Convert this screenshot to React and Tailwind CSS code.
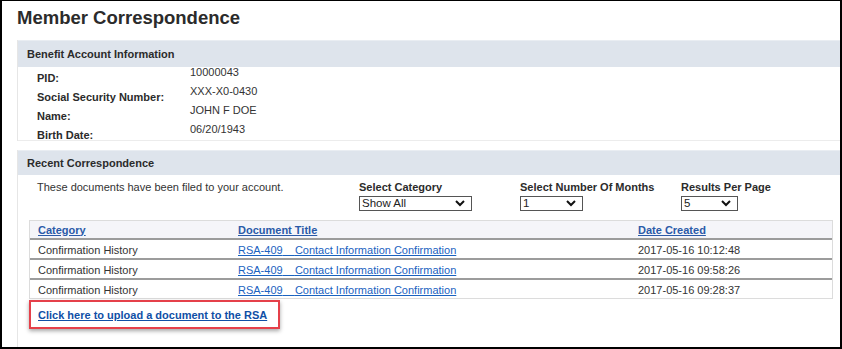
import React from "react";

const font = { fontFamily: '"Liberation Sans", Arial, sans-serif' };

function Chevron() {
  return (
    <svg width="10" height="7" viewBox="0 0 10 7" className="shrink-0">
      <path d="M1 1 L5 5 L9 1" fill="none" stroke="#111" strokeWidth="2" />
    </svg>
  );
}

function Select({ value, width }) {
  return (
    <div
      className={`mt-[2px] flex h-[15px] items-center justify-between border border-[#555] bg-white pl-[2px] pr-[6px] text-[11.5px] leading-[13px] text-[#222] ${width}`}
    >
      <span>{value}</span>
      <Chevron />
    </div>
  );
}

const rows = [
  "2017-05-16 10:12:48",
  "2017-05-16 09:58:26",
  "2017-05-16 09:28:37",
];

export default function App() {
  return (
    <div
      style={font}
      className="h-[349px] w-[842px] overflow-hidden border-t border-r-2 border-b-2 border-l-2 border-black bg-white text-[11px] text-[#333]"
    >
      <h1 className="ml-[15px] mt-[5px] whitespace-nowrap text-[18.5px] font-bold leading-[23px] text-[#2b2b2b]">
        Member Correspondence
      </h1>

      {/* Panel 1 */}
      <div className="ml-[15px] mt-[11px] border-l border-[#e6e6e6]">
        <div className="flex h-[27px] items-center border-t border-[#e9edf2] bg-[#dee4ec] pl-[9px] font-bold text-[#2b2b2b]">
          Benefit Account Information
        </div>
        <div className="flex h-[74px] border-b border-[#ececec] pl-[19px]">
          <div className="w-[153px] pt-[2px] font-bold leading-[19px] text-[#2b2b2b]">
            <div>PID:</div>
            <div>Social Security Number:</div>
            <div>Name:</div>
            <div>Birth Date:</div>
          </div>
          <div className="-mt-[4px] leading-[19px] text-[#333]">
            <div>10000043</div>
            <div>XXX-X0-0430</div>
            <div>JOHN F DOE</div>
            <div>06/20/1943</div>
          </div>
        </div>
      </div>

      {/* Panel 2 */}
      <div className="ml-[15px] mt-[9px] h-[200px] border-l border-[#e6e6e6]">
        <div className="flex h-[25px] items-center border-t border-[#e9edf2] bg-[#dee4ec] pl-[9px] font-bold text-[#2b2b2b]">
          Recent Correspondence
        </div>

        <div className="mt-[5px] flex pl-[19px] leading-[14px]">
          <div className="w-[322px]">These documents have been filed to your account.</div>
          <div className="w-[161px]">
            <div className="font-bold text-[#2b2b2b]">Select Category</div>
            <Select value="Show All" width="w-[113px]" />
          </div>
          <div className="w-[161px]">
            <div className="font-bold text-[#2b2b2b]">Select Number Of Months</div>
            <Select value="1" width="w-[63px]" />
          </div>
          <div>
            <div className="font-bold text-[#2b2b2b]">Results Per Page</div>
            <Select value="5" width="w-[57px]" />
          </div>
        </div>

        <div className="ml-[11px] mr-[7px] mt-[9px] border border-[#dcdcdc]">
          <div className="grid h-[17px] grid-cols-[200px_400px_1fr] items-center bg-[#f5f5f9] pl-[8px] font-bold leading-[14px]">
            <a className="justify-self-start text-[#2a5aa8] underline" href="#">Category</a>
            <a className="justify-self-start text-[#2a5aa8] underline" href="#">Document Title</a>
            <a className="justify-self-start text-[#2a5aa8] underline" href="#">Date Created</a>
          </div>
          {rows.map((d) => (
            <div
              key={d}
              className="grid h-[20px] grid-cols-[200px_400px_1fr] items-center border-t-2 border-[#9c9c9c] pl-[8px] pt-[1px] leading-[14px]"
            >
              <div className="text-[#333]">Confirmation History</div>
              <a className="justify-self-start text-[#1a62bf] underline" href="#">
                RSA-409{"\u00a0\u00a0\u00a0\u00a0"}Contact Information Confirmation
              </a>
              <div className="text-[#333]">{d}</div>
            </div>
          ))}
        </div>

        <div className="ml-[11px] mt-[1px] flex h-[29px] w-[251px] items-center border-2 border-[#e5404a] pl-[7px] shadow-[0_2px_4px_rgba(0,0,0,0.35)]">
          <a className="whitespace-nowrap font-bold leading-[14px] text-[#0f4fa6] underline" href="#">
            Click here to upload a document to the RSA
          </a>
        </div>
      </div>
    </div>
  );
}
